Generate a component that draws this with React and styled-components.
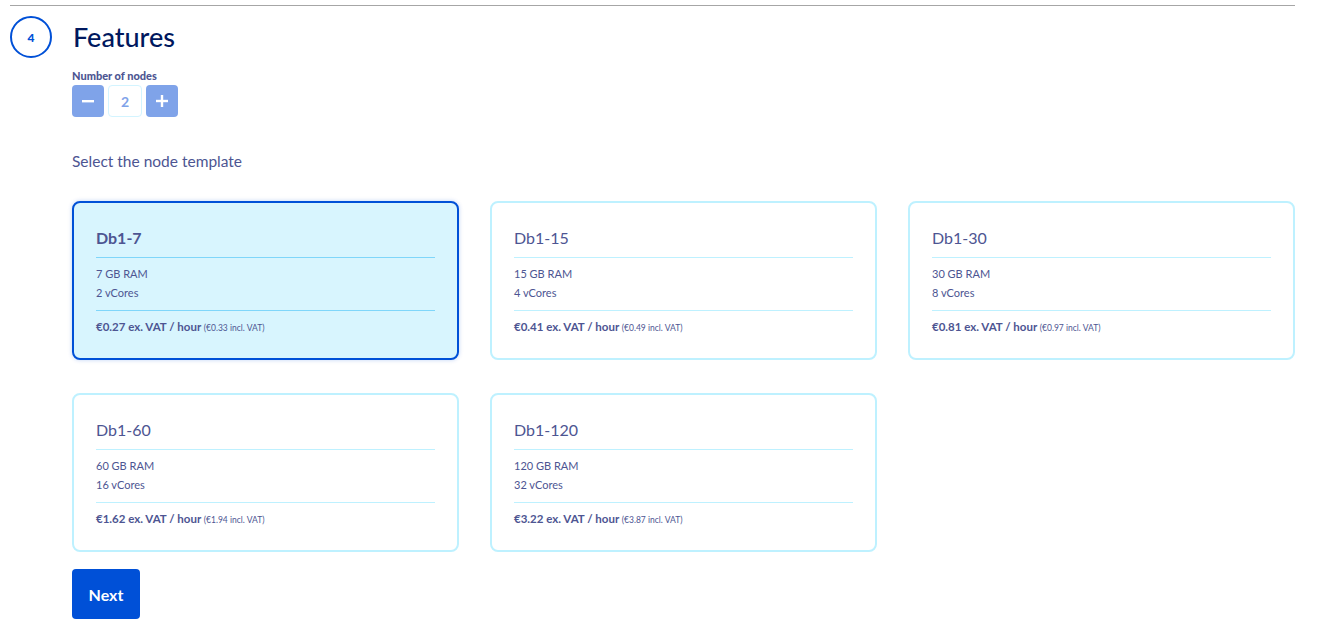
import React, { useState } from 'react';
import styled, { createGlobalStyle } from 'styled-components';

const templates = [
  { name: 'Db1-7', ram: '7 GB RAM', cores: '2 vCores', price: '€0.27', incl: '€0.33' },
  { name: 'Db1-15', ram: '15 GB RAM', cores: '4 vCores', price: '€0.41', incl: '€0.49' },
  { name: 'Db1-30', ram: '30 GB RAM', cores: '8 vCores', price: '€0.81', incl: '€0.97' },
  { name: 'Db1-60', ram: '60 GB RAM', cores: '16 vCores', price: '€1.62', incl: '€1.94' },
  { name: 'Db1-120', ram: '120 GB RAM', cores: '32 vCores', price: '€3.22', incl: '€3.87' },
];

const App = () => {
  const [selected, setSelected] = useState('Db1-7');
  const [nodes, setNodes] = useState(2);

  return (
    <>
      <GlobalStyle />
      <Page>
        <TopRule />
        <StepHeader>
          <StepBadge>4</StepBadge>
          <Title>Features</Title>
        </StepHeader>

        <Content>
          <FieldLabel>Number of nodes</FieldLabel>
          <Stepper>
            <StepButton onClick={() => setNodes((n) => Math.max(1, n - 1))}>
              <svg width="12" height="12" viewBox="0 0 12 12">
                <rect x="0" y="5" width="12" height="2.4" fill="#fff" />
              </svg>
            </StepButton>
            <StepValue>{nodes}</StepValue>
            <StepButton onClick={() => setNodes((n) => n + 1)}>
              <svg width="12" height="12" viewBox="0 0 12 12">
                <rect x="0" y="4.8" width="12" height="2.4" fill="#fff" />
                <rect x="4.8" y="0" width="2.4" height="12" fill="#fff" />
              </svg>
            </StepButton>
          </Stepper>

          <SectionText>Select the node template</SectionText>

          <CardGrid>
            {templates.map((t) => {
              const active = t.name === selected;
              return (
                <Card key={t.name} $active={active} onClick={() => setSelected(t.name)}>
                  <CardTitle $active={active}>{t.name}</CardTitle>
                  <CardRule $active={active} />
                  <Spec>{t.ram}</Spec>
                  <Spec>{t.cores}</Spec>
                  <CardRule $active={active} />
                  <Price>
                    {t.price} ex. VAT / hour <Incl>({t.incl} incl. VAT)</Incl>
                  </Price>
                </Card>
              );
            })}
          </CardGrid>

          <NextButton>Next</NextButton>
        </Content>
      </Page>
    </>
  );
};

const GlobalStyle = createGlobalStyle`
  body {
    margin: 0;
    background: #fff;
    font-family: Lato, "Open Sans", sans-serif;
    color: #4d5592;
  }
`;

const Page = styled.div`
  padding: 5px 45px 0 10px;
`;

const TopRule = styled.div`
  border-top: 1px solid #a6a6a6;
`;

const StepHeader = styled.div`
  display: flex;
  align-items: center;
  gap: 21px;
  margin-top: 10px;
`;

const StepBadge = styled.div`
  width: 42px;
  height: 42px;
  box-sizing: border-box;
  border: 2px solid #0050d7;
  border-radius: 50%;
  display: flex;
  align-items: center;
  justify-content: center;
  color: #0050d7;
  font-size: 12px;
  font-weight: 900;
`;

const Title = styled.h2`
  margin: 0;
  font-size: 27px;
  font-weight: 500;
  color: #00185e;
  line-height: 32px;
`;

const Content = styled.div`
  padding-left: 62px;
`;

const FieldLabel = styled.div`
  margin-top: 11px;
  font-size: 11px;
  font-weight: 900;
  line-height: 14px;
`;

const Stepper = styled.div`
  display: flex;
  gap: 4px;
  margin-top: 2px;
`;

const StepButton = styled.button`
  width: 32px;
  height: 32px;
  padding: 0;
  border: none;
  border-radius: 4px;
  background: #7fa3e9;
  display: flex;
  align-items: center;
  justify-content: center;
  cursor: pointer;
`;

const StepValue = styled.div`
  width: 34px;
  height: 32px;
  box-sizing: border-box;
  border: 1px solid #d3f4ff;
  border-radius: 4px;
  display: flex;
  align-items: center;
  justify-content: center;
  color: #7fa3e9;
  font-size: 14px;
  font-weight: 700;
`;

const SectionText = styled.p`
  margin: 35px 0 0;
  font-size: 15.5px;
  line-height: 18px;
`;

const CardGrid = styled.div`
  display: grid;
  grid-template-columns: repeat(3, 387px);
  column-gap: 31px;
  row-gap: 33px;
  margin-top: 31px;
`;

const Card = styled.div`
  box-sizing: border-box;
  height: 159px;
  padding: 25px 22px 0;
  border: 2px solid ${(p) => (p.$active ? '#0050d7' : '#bef1ff')};
  border-radius: 8px;
  background: ${(p) => (p.$active ? '#d8f5fe' : '#fff')};
  box-shadow: ${(p) => (p.$active ? '0 0 4px rgba(0, 80, 215, 0.25)' : 'none')};
  cursor: pointer;
`;

const CardTitle = styled.div`
  font-size: 16px;
  line-height: 20px;
  font-weight: ${(p) => (p.$active ? 700 : 400)};
`;

const CardRule = styled.div`
  height: 1px;
  margin: 9px 0 6px;
  background: ${(p) => (p.$active ? '#7fd6fa' : '#bef1ff')};

  & + div + div + & {
    margin-top: 8px;
  }
`;

const Spec = styled.div`
  font-size: 11px;
  line-height: 19px;
`;

const Price = styled.div`
  margin-top: 8px;
  font-size: 11.5px;
  font-weight: 700;
  line-height: 16px;
`;

const Incl = styled.span`
  font-size: 8.5px;
  font-weight: 400;
`;

const NextButton = styled.button`
  margin-top: 17px;
  width: 68px;
  height: 50px;
  border: none;
  border-radius: 4px;
  background: #0050d7;
  color: #fff;
  font-family: Lato, "Open Sans", sans-serif;
  font-size: 16px;
  font-weight: 700;
  cursor: pointer;
`;

export default App;
